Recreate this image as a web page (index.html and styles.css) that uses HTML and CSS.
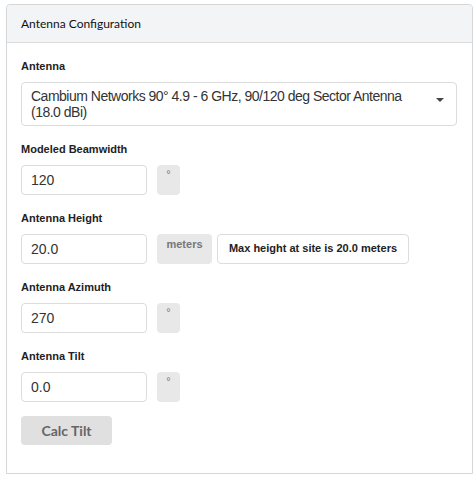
FILE: index.html
```html
<!DOCTYPE html>
<html>
<head>
<meta charset="utf-8">
<link rel="stylesheet" href="styles.css">
</head>
<body>
<div class="card">
  <div class="card-header">Antenna Configuration</div>
  <div class="card-body">
    <div class="group">
      <div class="label">Antenna</div>
      <div class="select">
        <span class="select-text">Cambium Networks 90° 4.9 - 6 GHz, 90/120 deg Sector Antenna (18.0 dBi)</span>
        <span class="caret"></span>
      </div>
    </div>
    <div class="group">
      <div class="label">Modeled Beamwidth</div>
      <div class="row">
        <div class="input">120</div>
        <div class="unit unit-deg">°</div>
      </div>
    </div>
    <div class="group">
      <div class="label">Antenna Height</div>
      <div class="row">
        <div class="input">20.0</div>
        <div class="unit unit-text">meters</div>
        <div class="info">Max height at site is 20.0 meters</div>
      </div>
    </div>
    <div class="group">
      <div class="label">Antenna Azimuth</div>
      <div class="row">
        <div class="input">270</div>
        <div class="unit unit-deg">°</div>
      </div>
    </div>
    <div class="group">
      <div class="label">Antenna Tilt</div>
      <div class="row">
        <div class="input">0.0</div>
        <div class="unit unit-deg">°</div>
      </div>
    </div>
    <button class="btn">Calc Tilt</button>
  </div>
</div>
</body>
</html>
```
FILE: styles.css
```css
html, body {
  margin: 0;
  padding: 0;
  background: #ffffff;
}
body {
  padding: 4px 2px 0 6px;
  font-family: "Liberation Sans", Arial, sans-serif;
}
.card {
  width: 465px;
  height: 468px;
  border: 1px solid #d6d6d6;
  border-radius: 4px 4px 0 0;
  box-sizing: content-box;
}
.card-header {
  height: 37px;
  background: #f3f4f5;
  border-bottom: 1px solid #dcdcdc;
  border-radius: 4px 4px 0 0;
  font-family: Lato, "Liberation Sans", sans-serif;
  font-size: 12px;
  color: #111;
  display: flex;
  align-items: center;
  padding-left: 14px;
}
.card-body {
  padding: 17px 14px 0 14px;
  display: flex;
  flex-direction: column;
  align-items: flex-start;
}
.group {
  display: flex;
  flex-direction: column;
  margin-bottom: 17px;
  width: 100%;
}
.label {
  font-size: 11px;
  font-weight: bold;
  color: #222;
  line-height: 13px;
  margin-bottom: 9px;
}
.select {
  width: 436px;
  box-sizing: border-box;
  height: 44px;
  border: 1px solid #dcdcdc;
  border-radius: 4px;
  padding: 5px 28px 5px 9px;
  font-size: 14px;
  line-height: 16px;
  color: #333;
  position: relative;
}
.select-text {
  letter-spacing: -0.5px;
}
.caret {
  position: absolute;
  right: 12px;
  top: 15px;
  width: 0;
  height: 0;
  border-left: 4px solid transparent;
  border-right: 4px solid transparent;
  border-top: 4px solid #444;
}
.row {
  display: flex;
  align-items: stretch;
  height: 30px;
}
.input {
  width: 126px;
  box-sizing: border-box;
  border: 1px solid #dcdcdc;
  border-radius: 4px;
  padding: 0 9px;
  font-size: 14px;
  color: #333;
  display: flex;
  align-items: center;
}
.unit {
  margin-left: 10px;
  background: #e8e8e8;
  border-radius: 4px;
  color: #777;
  font-size: 11px;
  box-sizing: border-box;
}
.unit-deg {
  width: 23px;
  text-align: center;
  padding-top: 3px;
  line-height: 13px;
}
.unit-text {
  width: 55px;
  text-align: center;
  font-weight: bold;
  padding-top: 4px;
  line-height: 13px;
}
.info {
  margin-left: 5px;
  width: 192px;
  box-sizing: border-box;
  border: 1px solid #dcdcdc;
  border-radius: 4px;
  font-size: 11px;
  font-weight: bold;
  color: #222;
  display: flex;
  align-items: center;
  justify-content: center;
  padding-bottom: 2px;
}
.btn {
  margin-top: -3px;
  width: 91px;
  height: 29px;
  background: #e0e0e0;
  border: none;
  border-radius: 4px;
  font-family: Lato, "Liberation Sans", sans-serif;
  font-weight: bold;
  font-size: 14px;
  color: #666;
  padding: 0;
}
```
